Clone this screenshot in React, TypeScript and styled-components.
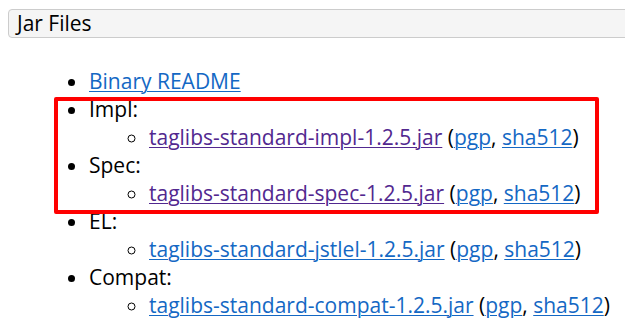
import { styled, createGlobalStyle } from "styled-components";

const GlobalStyle = createGlobalStyle`
  html, body {
    margin: 0;
    padding: 0;
    background: #ffffff;
    overflow: hidden;
  }
  body {
    font-family: "Open Sans", "Noto Sans", sans-serif;
    color: #000000;
  }
`;

type JarItem = {
  label: string;
  file: string;
  visited?: boolean;
};

const jars: JarItem[] = [
  { label: "Impl:", file: "taglibs-standard-impl-1.2.5.jar", visited: true },
  { label: "Spec:", file: "taglibs-standard-spec-1.2.5.jar", visited: true },
  { label: "EL:", file: "taglibs-standard-jstlel-1.2.5.jar" },
  { label: "Compat:", file: "taglibs-standard-compat-1.2.5.jar" },
];

const App = () => {
  return (
    <Page>
      <GlobalStyle />
      <SectionHeader>Jar Files</SectionHeader>

      <FileList>
        <Item>
          <Link href="#">Binary README</Link>
        </Item>
        {jars.map((jar) => (
          <Item key={jar.file}>
            {jar.label}
            <SubList>
              <SubItem>
                <Link href="#" $visited={jar.visited}>
                  {jar.file}
                </Link>{" "}
                (<Link href="#">pgp</Link>, <Link href="#">sha512</Link>)
              </SubItem>
            </SubList>
          </Item>
        ))}
      </FileList>

      <Highlight />
    </Page>
  );
};

export default App;

const Page = styled.div`
  position: relative;
  padding: 9px 0 0 8px;
  min-height: 329px;
  box-sizing: border-box;
`;

const SectionHeader = styled.h3`
  margin: 0 -20px 0 0;
  padding: 0 0 0 8px;
  height: 27px;
  line-height: 27px;
  font-size: 21px;
  font-weight: 500;
  background: #f5f5f5;
  border: 1px solid #cccccc;
  border-radius: 4px;
`;

const FileList = styled.ul`
  margin: 29px 0 0 0;
  padding: 0 0 0 81px;
  list-style: disc;
  font-size: 21px;
  line-height: 28px;
`;

const Item = styled.li``;

const SubList = styled.ul`
  margin: 0;
  padding: 0 0 0 60px;
  list-style: circle;
`;

const SubItem = styled.li`
  white-space: nowrap;
`;

const Link = styled.a<{ $visited?: boolean }>`
  color: ${(p) => (p.$visited ? "#52288f" : "#1468c4")};
  text-decoration: underline;
  text-underline-offset: 2px;
  text-decoration-thickness: 1px;
`;

const Highlight = styled.div`
  position: absolute;
  left: 54px;
  top: 97px;
  width: 545px;
  height: 117px;
  box-sizing: border-box;
  border: 4px solid #ff0000;
  border-radius: 2px;
  pointer-events: none;
`;
